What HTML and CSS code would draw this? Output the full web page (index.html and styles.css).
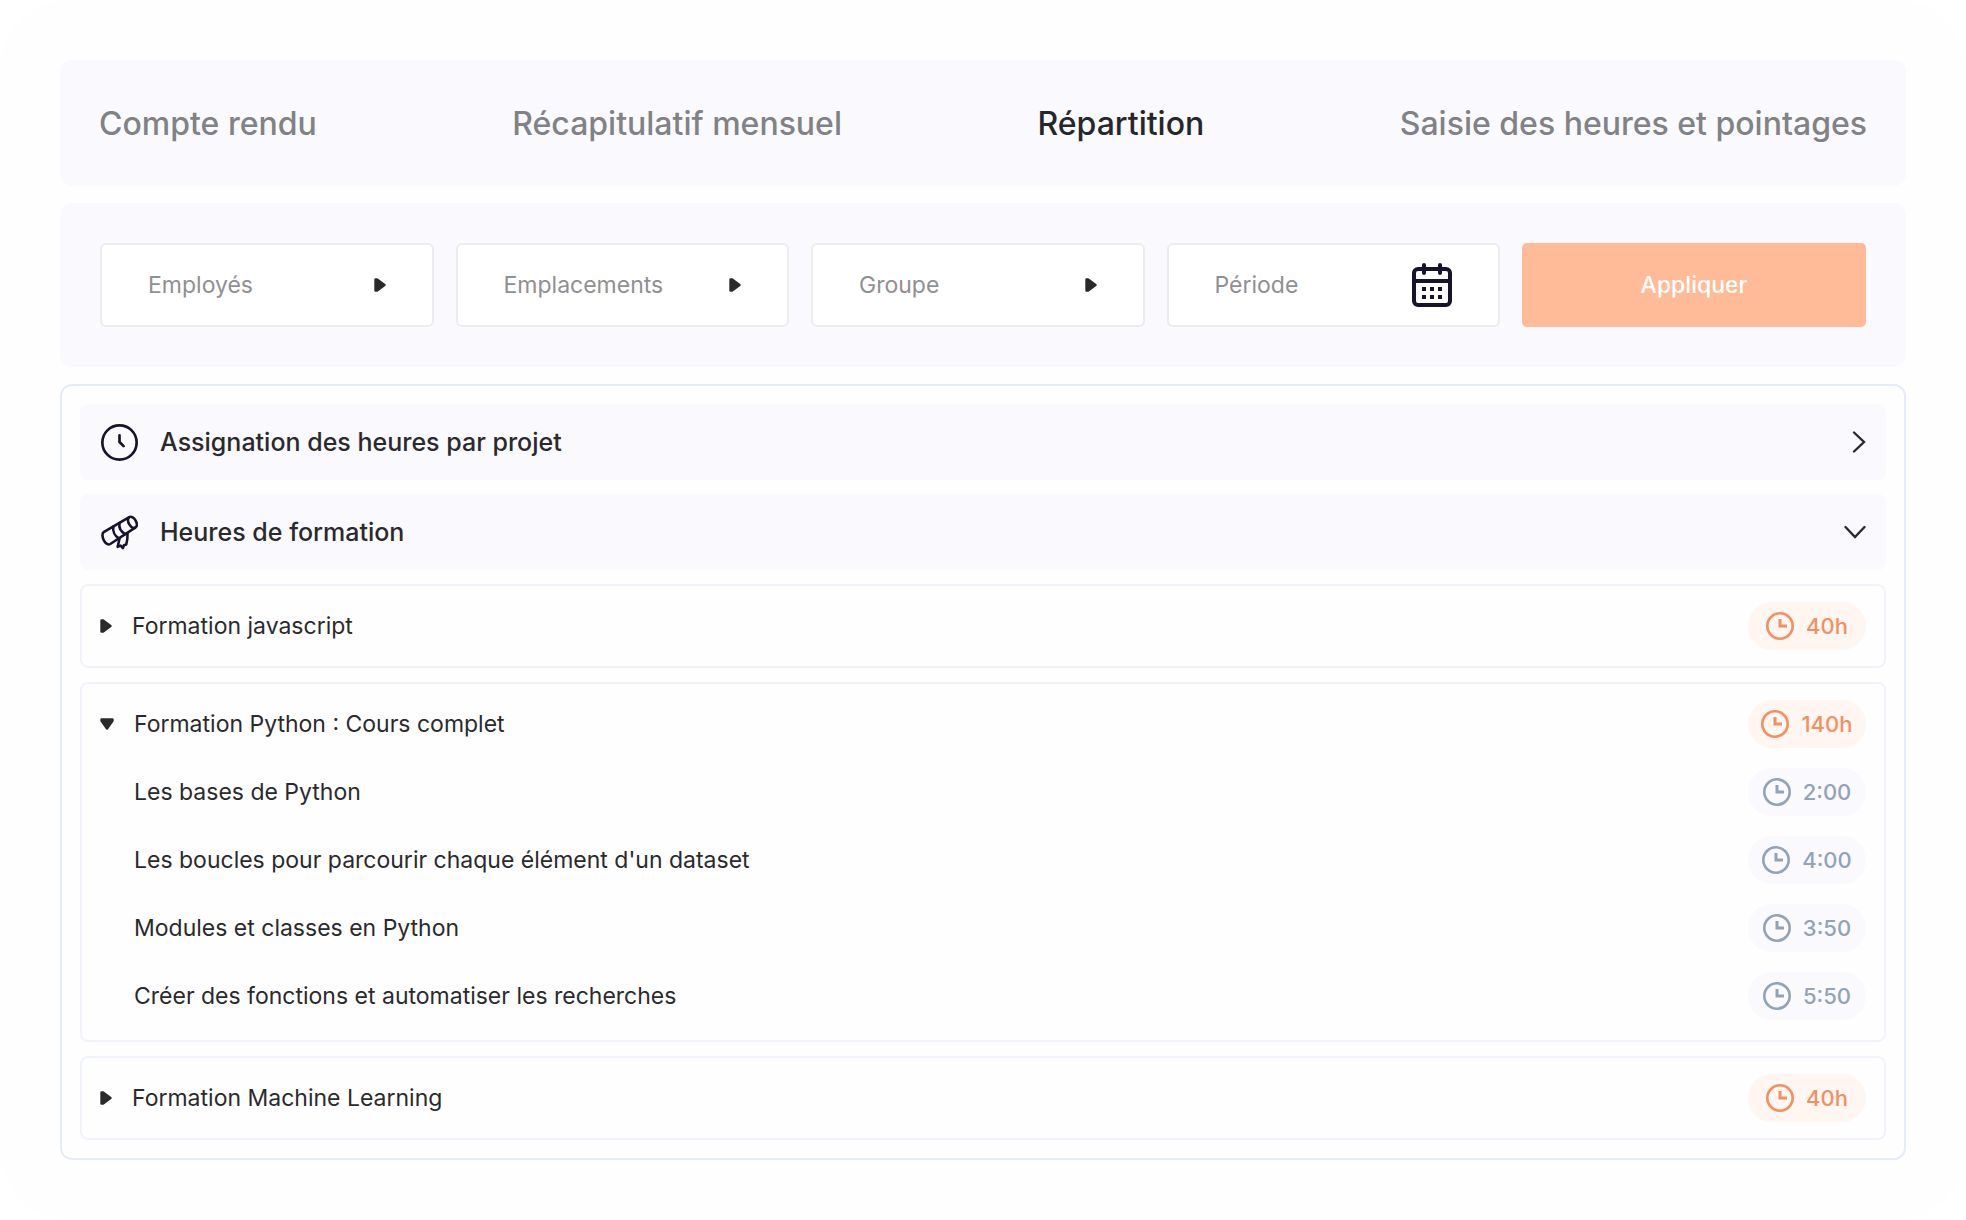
FILE: index.html
```
<!DOCTYPE html>
<html lang="fr">
<head>
  <meta charset="UTF-8" />
  <title>Répartition</title>
  <meta name="viewport" content="width=device-width, initial-scale=1">
  <link rel="stylesheet" href="styles.css">
</head>
<body>
  <!-- Shared icons -->
  <svg class="sprite" aria-hidden="true">
    <symbol id="tri-right" viewBox="0 0 12 14">
      <path d="M1.5 1.5v11h1.6L10.5 7 3.1 1.5z" fill="currentColor" stroke="currentColor" stroke-width="2.4" stroke-linejoin="round"/>
    </symbol>
    <symbol id="tri-down" viewBox="0 0 14 12">
      <path d="M1.5 1.5h11v1.2L7 10.5 1.5 2.7z" fill="currentColor" stroke="currentColor" stroke-width="2.4" stroke-linejoin="round"/>
    </symbol>
    <symbol id="clock" viewBox="0 0 28 28">
      <circle cx="14" cy="14" r="12.7" fill="none" stroke="currentColor" stroke-width="2.6"/>
      <path d="M14 7v7h7" fill="none" stroke="currentColor" stroke-width="3"/>
    </symbol>
  </svg>

  <main class="page">
    <nav class="tabs">
      <a href="#">Compte rendu</a>
      <a href="#">Récapitulatif mensuel</a>
      <a href="#" class="active" aria-current="page">Répartition</a>
      <a href="#">Saisie des heures et pointages</a>
    </nav>

    <form class="filters">
      <div class="field">
        <select aria-label="Employés"><option>Employés</option></select>
        <svg class="tri-right"><use href="#tri-right"/></svg>
      </div>
      <div class="field">
        <select aria-label="Emplacements"><option>Emplacements</option></select>
        <svg class="tri-right"><use href="#tri-right"/></svg>
      </div>
      <div class="field">
        <select aria-label="Groupe"><option>Groupe</option></select>
        <svg class="tri-right"><use href="#tri-right"/></svg>
      </div>
      <div class="field">
        <input type="text" placeholder="Période" aria-label="Période">
        <svg class="calendar" viewBox="0 0 40 44" fill="none" stroke="currentColor" stroke-width="4" stroke-linecap="round">
          <rect x="2" y="6" width="36" height="36" rx="4"/>
          <path d="M2 18h36M12 2v8M28 2v8"/>
          <path d="M10 26h4M18 26h4M26 26h4M10 34h4M18 34h4M26 34h4" stroke-linecap="butt"/>
        </svg>
      </div>
      <button type="button" class="apply">Appliquer</button>
    </form>

    <section class="panel">
      <button type="button" class="group" aria-expanded="false">
        <svg class="group-icon" viewBox="0 0 36 36" fill="none" stroke="currentColor" stroke-width="2.6" stroke-linecap="round" stroke-linejoin="round">
          <circle cx="18" cy="18" r="16.7"/>
          <path d="M18 11v6.5l4 4"/>
        </svg>
        <span>Assignation des heures par projet</span>
        <svg class="chevron-right" viewBox="0 0 14 22" fill="none" stroke="currentColor" stroke-width="2.4" stroke-linecap="round"><path d="M2 1.5L12 11 2 20.5"/></svg>
      </button>

      <button type="button" class="group" aria-expanded="true">
        <svg class="group-icon" viewBox="0 0 36 36" fill="none" stroke="currentColor" stroke-width="2.5" stroke-linecap="round" stroke-linejoin="round">
          <path d="M2.6 17.600L27.500 3c2-1.100 4.700.6 6.200 3.400s1.600 5.700-.4 6.900L9 29.200c-2 1.200-4.400-.3-6-3.100s-2.300-7.300-.4-8.500z"/>
          <path d="M27.500 3c-2 1.800-1.200 5 .2 7.300s3.600 4 5.600 3"/>
          <path d="M12 12.300c-.8 4.200 1.400 8.800 5.200 11.400M18 8.800c-.8 4.200 1.400 8.400 5.600 10.800"/>
          <path d="M18 24l-1.800 8 2.900-1.200 2.200 2.400 1-2.800 2.300-.8c.8-3 1.400-6 1.200-10"/>
        </svg>
        <span>Heures de formation</span>
        <svg class="chevron-down" viewBox="0 0 22 14" fill="none" stroke="currentColor" stroke-width="2.4" stroke-linecap="round"><path d="M1.500 2L11 12l9.500-10"/></svg>
      </button>

      <details class="course">
        <summary>
          <svg class="tri-right"><use href="#tri-right"/></svg>
          <span class="name">Formation javascript</span>
          <span class="pill total"><svg><use href="#clock"/></svg>40h</span>
        </summary>
      </details>

      <details class="course" open>
        <summary>
          <svg class="tri-down"><use href="#tri-down"/></svg>
          <span class="name">Formation Python : Cours complet</span>
          <span class="pill total"><svg><use href="#clock"/></svg>140h</span>
        </summary>
        <ul class="lessons">
          <li><span class="name">Les bases de Python</span><span class="pill"><svg><use href="#clock"/></svg>2:00</span></li>
          <li><span class="name">Les boucles pour parcourir chaque élément d'un dataset</span><span class="pill"><svg><use href="#clock"/></svg>4:00</span></li>
          <li><span class="name">Modules et classes en Python</span><span class="pill"><svg><use href="#clock"/></svg>3:50</span></li>
          <li><span class="name">Créer des fonctions et automatiser les recherches</span><span class="pill"><svg><use href="#clock"/></svg>5:50</span></li>
        </ul>
      </details>

      <details class="course">
        <summary>
          <svg class="tri-right"><use href="#tri-right"/></svg>
          <span class="name">Formation Machine Learning</span>
          <span class="pill total"><svg><use href="#clock"/></svg>40h</span>
        </summary>
      </details>
    </section>
  </main>
</body>
</html>
```
FILE: styles.css
```
* {
  box-sizing: border-box;
}
body {
  margin: 0;
  background: #fff;
  color: #2a2a2d;
  font-family: Inter, Arial, sans-serif;
  font-size: 23px;
}
svg {
  flex: none;
}
.sprite {
  display: none;
}
.page {
  min-height: 100vh;
  padding: 60px;
  background: #fefefe;
  border-radius: 70px;
}

/* Tabs */
.tabs {
  display: flex;
  justify-content: space-between;
  align-items: center;
  gap: 24px;
  min-height: 126px;
  padding: 16px 39px;
  margin-bottom: 17px;
  background: #faf9fe;
  border-radius: 12px;
}
.tabs a {
  color: #808285;
  font-size: 32px;
  font-weight: 500;
  text-decoration: none;
}
.tabs a.active {
  color: #26262d;
}

/* Filters */
.filters {
  display: grid;
  grid-template-columns: repeat(4, minmax(0, 1fr)) 344px;
  gap: 22px;
  padding: 40px;
  margin-bottom: 17px;
  background: #faf9fe;
  border-radius: 12px;
}
.field {
  display: flex;
  align-items: center;
  height: 84px;
  padding: 0 46px;
  background: #fff;
  border: 2px solid #ececef;
  border-radius: 6px;
}
.field select,
.field input {
  flex: 1;
  min-width: 0;
  height: 100%;
  padding: 0;
  border: none;
  appearance: none;
  background: none;
  color: #909092;
  font: inherit;
}
.field input::placeholder {
  color: #909092;
}
.tri-right {
  width: 12px;
  height: 14px;
}
.tri-down {
  width: 14px;
  height: 12px;
}
.calendar {
  width: 40px;
  height: 44px;
  color: #17132c;
}
.apply {
  border: none;
  border-radius: 5px;
  background: #ffbb98;
  color: #fff;
  font: inherit;
  font-weight: 500;
  cursor: pointer;
}

/* Hours panel */
.panel {
  display: flex;
  flex-direction: column;
  gap: 14px;
  padding: 18px;
  border: 2px solid #e6ebfa;
  border-radius: 12px;
}
.group {
  display: flex;
  align-items: center;
  gap: 22px;
  height: 76px;
  padding: 0 20px 0 21px;
  border: none;
  border-radius: 8px;
  background: #faf9fe;
  color: #2a2a2d;
  font: inherit;
  font-size: 25px;
  font-weight: 500;
  text-align: left;
  cursor: pointer;
}
.group span {
  flex: 1;
}
.group-icon {
  width: 37px;
  height: 37px;
  color: #17132c;
}
.chevron-right {
  width: 14px;
  height: 22px;
}
.chevron-down {
  width: 22px;
  height: 14px;
}
.course {
  padding: 16px 18px;
  border: 2px solid #f0f3fa;
  border-radius: 8px;
}
.course summary,
.lessons li {
  display: flex;
  align-items: center;
}
.course summary {
  gap: 20px;
  list-style: none;
  cursor: pointer;
}
.name {
  flex: 1;
}
.lessons {
  display: flex;
  flex-direction: column;
  gap: 20px;
  margin: 20px 0 4px;
  padding: 0 0 0 34px;
  list-style: none;
}
.pill {
  display: flex;
  align-items: center;
  justify-content: center;
  gap: 12px;
  min-width: 118px;
  height: 48px;
  border-radius: 24px;
  background: #faf9fe;
  color: #91a3b8;
  font-size: 22px;
  font-weight: 500;
}
.pill.total {
  background: #fff5f1;
  color: #f0915f;
}
.pill svg {
  width: 28px;
  height: 28px;
}
```
